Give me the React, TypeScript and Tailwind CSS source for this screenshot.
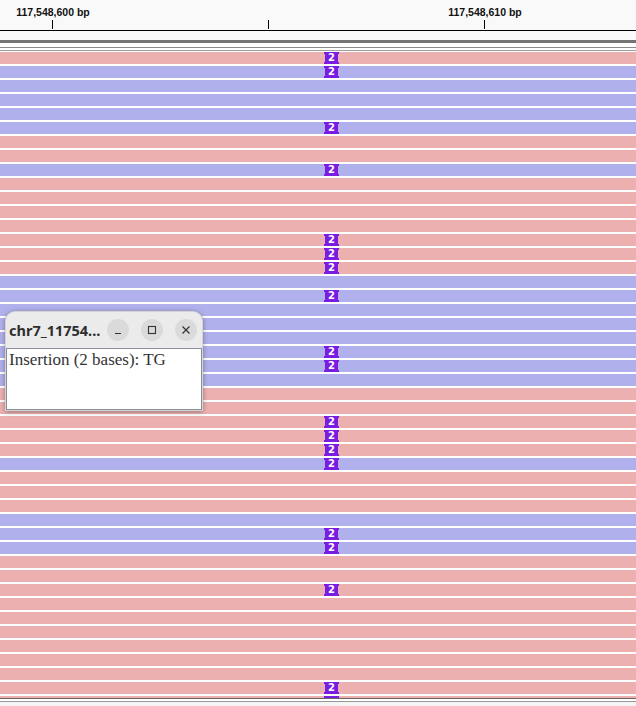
import React from "react";

type Row = { c: "p" | "b"; m?: boolean };

const spec = "PM BM B B B BM P P BM P P P P PM PM PM B BM B B B BM BM B P P PM PM PM BM P P P B BM BM P P PM P P P P P P PM";

const rows: Row[] = spec.split(" ").map((t) => ({
  c: t.startsWith("P") ? "p" : "b",
  m: t.includes("M"),
}));

const PURPLE = "bg-[#7a1de0]";

function Marker() {
  return (
    <div className="absolute left-[324px] top-0 w-[15px] h-[12px] flex flex-col items-center">
      <div className={`h-[2px] w-full ${PURPLE}`} />
      <div
        className={`h-[8px] w-[13px] ${PURPLE} flex items-center justify-center text-white text-[10px] font-bold leading-none`}
        style={{ fontFamily: '"DejaVu Sans", sans-serif' }}
      >
        2
      </div>
      <div className={`h-[2px] w-full ${PURPLE}`} />
    </div>
  );
}

function ReadRow({ row }: { row: Row }) {
  return (
    <div className="h-[14px] w-full">
      <div className={`relative h-[12px] w-full ${row.c === "p" ? "bg-[#ecb0b0]" : "bg-[#b0b0ec]"}`}>
        {row.m && <Marker />}
      </div>
    </div>
  );
}

export default function App() {
  return (
    <div className="relative w-[636px] h-[706px] overflow-hidden bg-[#f4f4f4] flex flex-col">
      {/* ruler */}
      <div
        className="relative h-[30px] bg-[#f9f9f9] text-[10.5px] font-bold text-[#111]"
        style={{ fontFamily: '"Liberation Sans", Arial, sans-serif' }}
      >
        <div className="absolute left-[16px] top-[5px] w-[74px] text-center leading-[14px]">117,548,600 bp</div>
        <div className="absolute left-[448px] top-[5px] w-[74px] text-center leading-[14px]">117,548,610 bp</div>
        <div className="absolute left-[52px] top-[20px] w-px h-[9px] bg-black" />
        <div className="absolute left-[268px] top-[20px] w-px h-[9px] bg-black" />
        <div className="absolute left-[484px] top-[20px] w-px h-[9px] bg-black" />
      </div>
      <div className="h-px bg-black" />
      <div className="h-[9px] bg-[#fafafa]" />
      <div className="h-[3px] bg-[#747474]" />
      <div className="h-[4px] bg-white" />
      <div className="h-px bg-[#8a8a8a]" />
      <div className="h-[2px] bg-white" />
      <div className="h-px bg-[#a0a0a0]" />
      <div className="h-px bg-white" />

      {/* reads */}
      <div className="flex flex-col bg-white">
        {rows.map((r, i) => (
          <ReadRow key={i} row={r} />
        ))}
        <div className="relative h-[2px] bg-[#ecb0b0] overflow-hidden">
          <div className={`absolute left-[324px] top-0 w-[15px] h-[2px] ${PURPLE}`} />
        </div>
      </div>
      <div className="h-px bg-[#666]" />
      <div className="h-[2px] bg-white" />
      <div className="h-px bg-[#999]" />

      {/* popup */}
      <div className="absolute left-[5px] top-[311px] w-[198px] rounded-t-[10px] bg-[#ebebeb] shadow-[0_1px_5px_rgba(0,0,0,0.35)] border border-[#d4d4d4] overflow-hidden">
        <div className="h-[36px] flex items-center pl-[3px] pr-[5px]">
          <div
            className="text-[14.5px] font-bold text-[#2e2e2e] flex-1 leading-none"
            style={{ fontFamily: '"Noto Sans", "Open Sans", sans-serif' }}
          >
            chr7_11754...
          </div>
          <div className="flex items-center gap-[12px]">
            <div className="w-[22px] h-[22px] rounded-full bg-[#dadada] flex items-center justify-center">
              <svg width="10" height="10" viewBox="0 0 10 10">
                <path d="M2 8.5h6" stroke="#333" strokeWidth="1.2" />
              </svg>
            </div>
            <div className="w-[22px] h-[22px] rounded-full bg-[#dadada] flex items-center justify-center">
              <svg width="10" height="10" viewBox="0 0 10 10">
                <rect x="1.5" y="1.5" width="7" height="7" fill="none" stroke="#333" strokeWidth="1.1" />
              </svg>
            </div>
            <div className="w-[22px] h-[22px] rounded-full bg-[#dadada] flex items-center justify-center">
              <svg width="10" height="10" viewBox="0 0 10 10">
                <path d="M1.5 1.5l7 7M8.5 1.5l-7 7" stroke="#333" strokeWidth="1.2" />
              </svg>
            </div>
          </div>
        </div>
        <div className="h-[62px] bg-white border border-[#8a8f98] px-[2px] pt-[1px]">
          <div
            className="text-[17px] text-[#333] leading-[20px]"
            style={{ fontFamily: '"Liberation Serif", "Times New Roman", serif' }}
          >
            Insertion (2 bases): TG
          </div>
        </div>
      </div>
    </div>
  );
}
